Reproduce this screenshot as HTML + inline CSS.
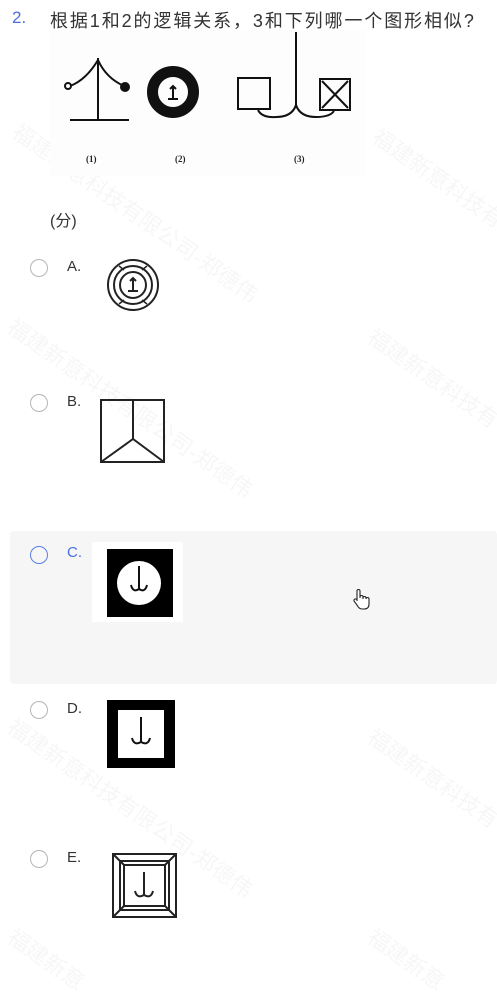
<!DOCTYPE html>
<html><head><meta charset="utf-8">
<style>
body{margin:0;width:497px;height:961px;background:#fff;position:relative;overflow:hidden;font-family:"Liberation Sans","Noto Sans CJK SC",sans-serif;}
.a{position:absolute;}
.t{font-size:16px;color:#333;}
.r{position:absolute;width:18px;height:18px;border:1.3px solid #b5b5b5;border-radius:50%;box-sizing:border-box;left:30px;}
.l{position:absolute;left:67px;font-size:15px;color:#333;}
.wm{position:absolute;color:rgba(0,0,0,0.035);font-size:22px;transform:rotate(35deg);transform-origin:left top;white-space:nowrap;}
</style></head><body>
<div class="a" style="left:10px;top:531px;width:487px;height:153px;background:#f6f6f6;border-radius:4px"></div>
<div class="wm" style="left:25px;top:115px">福建新意科技有限公司-郑德伟</div>
<div class="wm" style="left:385px;top:120px">福建新意科技有</div>
<div class="wm" style="left:20px;top:310px">福建新意科技有限公司-郑德伟</div>
<div class="wm" style="left:380px;top:320px">福建新意科技有</div>
<div class="wm" style="left:20px;top:710px">福建新意科技有限公司-郑德伟</div>
<div class="wm" style="left:380px;top:720px">福建新意科技有</div>
<div class="wm" style="left:20px;top:920px">福建新意</div>
<div class="wm" style="left:380px;top:920px">福建新意</div>

<div class="a" style="left:12px;top:8px;font-size:17px;color:#4a6ee0">2.</div>
<div class="a t" style="left:50px;top:7px;font-size:18px;letter-spacing:1.9px;white-space:nowrap">根据1和2的逻辑关系，3和下列哪一个图形相似?</div>

<svg class="a" style="left:50px;top:30px" width="315" height="146" viewBox="50 30 315 146">
<rect x="50" y="30" width="315" height="146" fill="#fdfdfd"/>
<g stroke="#111" stroke-width="2" fill="none">
<line x1="70" y1="120" x2="129" y2="120"/>
<line x1="98" y1="58" x2="98" y2="120"/>
<path d="M70 86 Q86 80 98 60 Q106 78 124 86"/>
<circle cx="68" cy="86" r="3" fill="#fff"/>
<circle cx="125" cy="87" r="4" fill="#111"/>
<circle cx="173" cy="92" r="20.5" stroke-width="11"/>
<line x1="173" y1="86" x2="173" y2="99"/><line x1="168" y1="99" x2="178" y2="99"/><path d="M170 89 L173 86 L176 89"/>
<rect x="238" y="78" width="32" height="31"/>
<line x1="296" y1="32" x2="296" y2="105"/>
<path d="M258 110 Q262 118 276 117 Q292 117 296 105 Q300 117 316 117 Q330 117 334 111"/>
<rect x="320" y="79" width="30" height="31"/>
<line x1="322" y1="81" x2="348" y2="108"/><line x1="348" y1="81" x2="322" y2="108"/>
</g>
<g font-family="Liberation Serif,serif" font-size="9" font-weight="bold" fill="#222">
<text x="86" y="162">(1)</text><text x="175" y="162">(2)</text><text x="294" y="162">(3)</text></g>
</svg>

<div class="a t" style="left:50px;top:207px">(分)</div>

<div class="r" style="top:259px"></div><div class="l" style="top:258px">A.</div>
<svg class="a" style="left:100px;top:252px" width="70" height="68">
<g stroke="#222" fill="none" stroke-width="2">
<circle cx="33" cy="33" r="25"/><circle cx="33" cy="33" r="19"/><circle cx="33" cy="33" r="13"/>
<line x1="33" y1="26" x2="33" y2="39"/><line x1="28" y1="39" x2="38" y2="39"/><path d="M30 29 L33 26 L36 29"/>
<path d="M19 14 L24 18 M47 14 L42 18 M19 52 L24 48 M47 52 L42 48" stroke-width="1.5"/>
</g></svg>

<div class="r" style="top:394px"></div><div class="l" style="top:393px">B.</div>
<svg class="a" style="left:98px;top:398px" width="70" height="68">
<g stroke="#222" fill="none" stroke-width="2">
<rect x="3" y="2" width="63" height="62"/><line x1="35" y1="2" x2="35" y2="41"/><path d="M3 64 L35 41 L66 64"/>
</g></svg>

<div class="r" style="top:546px;border-color:#5b7ee5;border-width:1.5px"></div><div class="l" style="top:544px;color:#4a6ee0">C.</div>
<div class="a" style="left:92px;top:542px;width:91px;height:80px;background:#fff"></div>
<svg class="a" style="left:107px;top:549px" width="66" height="68">
<rect x="0" y="0" width="66" height="68" fill="#000"/>
<circle cx="32" cy="34" r="22" fill="#fff"/>
<path d="M32 17 L32 40 M24 36 Q26 44 32 40 Q38 44 40 36" stroke="#111" stroke-width="2" fill="none"/>
</svg>
<svg class="a" style="left:352px;top:588px" width="20" height="24" viewBox="0 0 20 24">
<path d="M5 13 V3 a1.5 1.5 0 0 1 3 0 V10 M8 9 a1.5 1.5 0 0 1 3 0 V11 M11 10 a1.5 1.5 0 0 1 3 0 V11 M14 11 a1.5 1.5 0 0 1 3 0 V16 Q17 21 12 21 H10 Q7 21 5 17 L2 13 a1.5 1.5 0 0 1 3 -1" fill="#fff" stroke="#222" stroke-width="1.1"/>
</svg>

<div class="r" style="top:701px"></div><div class="l" style="top:700px">D.</div>
<svg class="a" style="left:107px;top:700px" width="68" height="68">
<rect x="0" y="0" width="68" height="68" fill="#000"/>
<rect x="11" y="10" width="46" height="48" fill="#fff"/>
<path d="M34 17 L34 42 M25 38 Q27 46 34 42 Q41 46 43 38" stroke="#111" stroke-width="2" fill="none"/>
</svg>

<div class="r" style="top:850px"></div><div class="l" style="top:849px">E.</div>
<svg class="a" style="left:110px;top:852px" width="68" height="68">
<g stroke="#222" fill="none" stroke-width="2">
<rect x="3" y="2" width="63" height="63"/><rect x="10" y="9" width="49" height="49"/><rect x="14" y="13" width="41" height="41"/>
<path d="M3 2 L14 13 M66 2 L55 13 M3 65 L14 54 M66 65 L55 54"/>
<path d="M34 20 L34 43 M25 39 Q27 47 34 43 Q41 47 43 39"/>
</g></svg>
</body></html>
